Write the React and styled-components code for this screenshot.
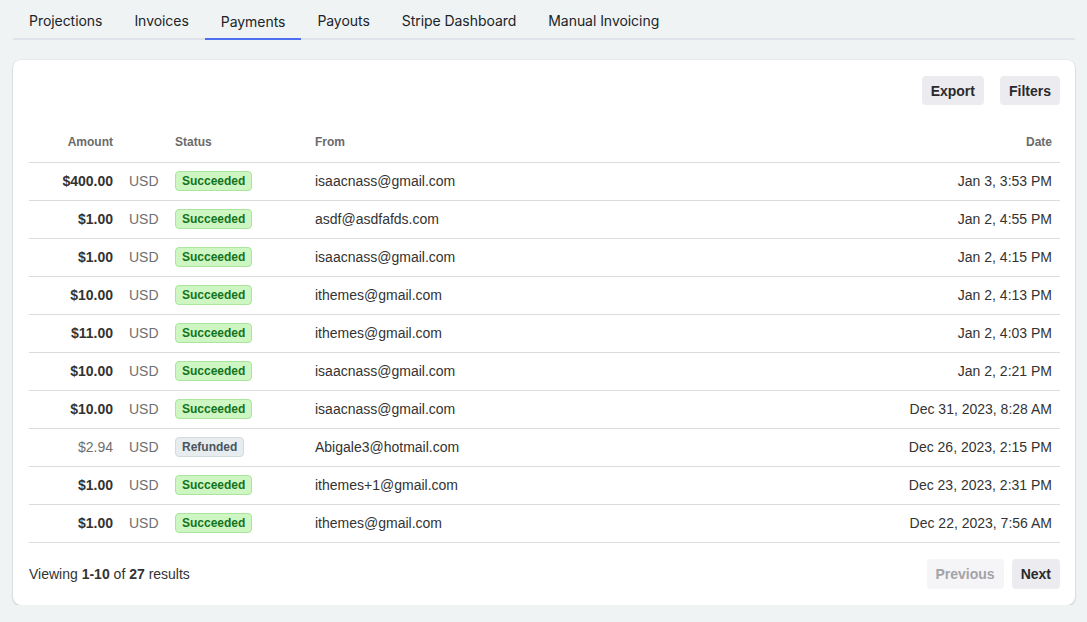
import React from 'react';
import styled, { createGlobalStyle } from 'styled-components';

const GlobalStyle = createGlobalStyle`
  body {
    margin: 0;
    background: #eff3f4;
    font-family: 'Liberation Sans', Arial, sans-serif;
    color: #333;
  }
`;

const Page = styled.div`
  padding: 0 12px 0 13px;
`;

const TabBar = styled.nav`
  display: flex;
  height: 38px;
  border-bottom: 2px solid #dfe2e8;
  font-family: 'Inter', sans-serif;
`;

const Tab = styled.div`
  padding: 0 16px;
  display: flex;
  align-items: center;
  font-size: 14px;
  letter-spacing: -0.05px;
  color: #202428;
  box-sizing: border-box;
  padding-top: ${p => (p.$active ? '4px' : '2px')};
  border-bottom: 2px solid ${p => (p.$active ? '#4c6ef0' : 'transparent')};
  margin-bottom: -2px;
  height: 40px;
`;

const Card = styled.div`
  margin-top: 20px;
  background: #fff;
  border-radius: 8px;
  box-shadow: 0 1px 2px rgba(0, 0, 0, 0.18), 0 0 0 1px rgba(0, 0, 0, 0.03);
  padding: 16px 15px 16px 16px;
`;

const Toolbar = styled.div`
  display: flex;
  justify-content: flex-end;
  gap: 16px;
`;

const Button = styled.button`
  font-family: 'Liberation Sans', Arial, sans-serif;
  font-weight: bold;
  font-size: 14px;
  border: none;
  border-radius: 4px;
  background: ${p => (p.$disabled ? '#f5f5f7' : '#ececf0')};
  color: ${p => (p.$disabled ? '#a3a3a8' : '#2a2a2e')};
  height: ${p => p.$h || 29}px;
  padding: 0 9px;
  cursor: pointer;
`;

const Table = styled.table`
  width: 100%;
  border-collapse: collapse;
  table-layout: fixed;
  margin-top: 17px;
  font-size: 14px;
`;

const Th = styled.th`
  font-size: 12px;
  font-weight: bold;
  color: #6a6a6a;
  text-align: ${p => p.$align || 'left'};
  padding: 0 8px;
  height: 40px;
  border-bottom: 1px solid #dcdcdc;
  width: ${p => (p.$w ? `${p.$w}px` : 'auto')};
  box-sizing: border-box;
`;

const Td = styled.td`
  padding: 0 8px;
  height: 37px;
  border-bottom: 1px solid #dcdcdc;
  text-align: ${p => p.$align || 'left'};
  color: ${p => p.$color || '#333'};
  font-weight: ${p => (p.$bold ? 'bold' : 'normal')};
  white-space: nowrap;
`;

const Badge = styled.span`
  display: inline-block;
  font-size: 12px;
  font-weight: bold;
  line-height: 18px;
  padding: 0 6px;
  border-radius: 4px;
  border: 1px solid ${p => (p.$refunded ? '#d3dade' : '#a9e59c')};
  background: ${p => (p.$refunded ? '#e7ecef' : '#cdf6c2')};
  color: ${p => (p.$refunded ? '#4a5561' : '#13731d')};
`;

const Footer = styled.div`
  display: flex;
  align-items: center;
  justify-content: space-between;
  margin-top: 16px;
`;

const Summary = styled.div`
  font-size: 14px;
  color: #333;
`;

const Pager = styled.div`
  display: flex;
  gap: 8px;
`;

const payments = [
  ['$400.00', 'Succeeded', 'isaacnass@gmail.com', 'Jan 3, 3:53 PM'],
  ['$1.00', 'Succeeded', 'asdf@asdfafds.com', 'Jan 2, 4:55 PM'],
  ['$1.00', 'Succeeded', 'isaacnass@gmail.com', 'Jan 2, 4:15 PM'],
  ['$10.00', 'Succeeded', 'ithemes@gmail.com', 'Jan 2, 4:13 PM'],
  ['$11.00', 'Succeeded', 'ithemes@gmail.com', 'Jan 2, 4:03 PM'],
  ['$10.00', 'Succeeded', 'isaacnass@gmail.com', 'Jan 2, 2:21 PM'],
  ['$10.00', 'Succeeded', 'isaacnass@gmail.com', 'Dec 31, 2023, 8:28 AM'],
  ['$2.94', 'Refunded', 'Abigale3@hotmail.com', 'Dec 26, 2023, 2:15 PM'],
  ['$1.00', 'Succeeded', 'ithemes+1@gmail.com', 'Dec 23, 2023, 2:31 PM'],
  ['$1.00', 'Succeeded', 'ithemes@gmail.com', 'Dec 22, 2023, 7:56 AM'],
];

const tabs = ['Projections', 'Invoices', 'Payments', 'Payouts', 'Stripe Dashboard', 'Manual Invoicing'];

export default function App() {
  return (
    <Page>
      <GlobalStyle />
      <TabBar>
        {tabs.map(t => (
          <Tab key={t} $active={t === 'Payments'}>{t}</Tab>
        ))}
      </TabBar>
      <Card>
        <Toolbar>
          <Button>Export</Button>
          <Button>Filters</Button>
        </Toolbar>
        <Table>
          <thead>
            <tr>
              <Th $w={92} $align="right">Amount</Th>
              <Th $w={46}></Th>
              <Th $w={140}>Status</Th>
              <Th>From</Th>
              <Th $w={220} $align="right">Date</Th>
            </tr>
          </thead>
          <tbody>
            {payments.map(([amount, status, from, date], i) => {
              const refunded = status === 'Refunded';
              return (
                <tr key={i}>
                  <Td $align="right" $bold={!refunded} $color={refunded ? '#6f6f6f' : '#333'}>{amount}</Td>
                  <Td $color="#6f6f6f">USD</Td>
                  <Td><Badge $refunded={refunded}>{status}</Badge></Td>
                  <Td>{from}</Td>
                  <Td $align="right">{date}</Td>
                </tr>
              );
            })}
          </tbody>
        </Table>
        <Footer>
          <Summary>Viewing <b>1-10</b> of <b>27</b> results</Summary>
          <Pager>
            <Button $disabled $h={30}>Previous</Button>
            <Button $h={30}>Next</Button>
          </Pager>
        </Footer>
      </Card>
    </Page>
  );
}
